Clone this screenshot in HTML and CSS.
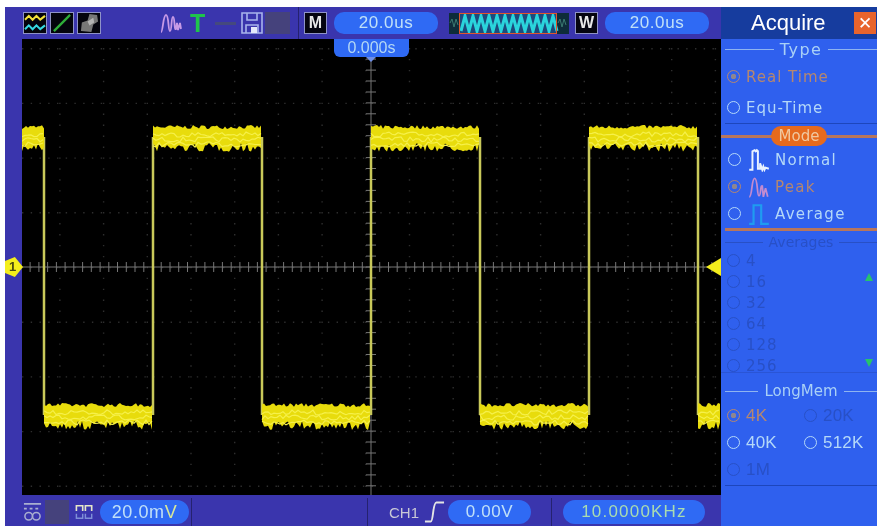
FILE: index.html
```html
<!DOCTYPE html>
<html lang="en">

<head>
    <meta charset="UTF-8">
    <meta name="viewport" content="width=device-width, initial-scale=1.0">
    <title>Oscilloscope - Acquire</title>
    <link rel="stylesheet" href="styles.css">
</head>

<body>
    <div class="scope">
        <div class="screen">
            <div class="top-bar">
                <div class="thumb">
                    <svg viewBox="0 0 23 21" class="fill">
                        <path d="M1 7 L5 3 L9 7 L13 3 L17 7 L22 3" stroke="#f2e23a" stroke-width="2.2" fill="none" />
                        <path d="M1 17 L5 13 L9 17 L13 13 L17 17 L22 13" stroke="#35d8e0" stroke-width="2.2" fill="none" />
                    </svg>
                </div>
                <div class="thumb">
                    <svg viewBox="0 0 23 21" class="fill">
                        <path d="M3 19 L20 2" stroke="#2fae3a" stroke-width="2.4" fill="none" />
                    </svg>
                </div>
                <div class="thumb">
                    <svg viewBox="0 0 23 21" class="fill">
                        <path d="M3 19 L4 10 L10 8 L12 1 L20 2 L21 9 L16 12 L14 20 Z" fill="#777" />
                        <path d="M10 9 L16 5 L17 10 L12 13 Z" fill="#b4b4b4" />
                    </svg>
                </div>
                <svg viewBox="0 0 22 22" class="peak-icon">
                    <path d="M1 20 C3 20 3 3 6 3 C9 3 8 19 10 19 C12 19 11 5 13 5 C15 5 14 19 16 17 L17 11 L18 18 L20 11 L21 17" stroke="#c79ae6" stroke-width="1.8" fill="none" />
                </svg>
                <span class="trig-t">T</span>
                <span class="dim-line"></span>
                <svg viewBox="0 0 22 22" class="save-icon">
                    <path d="M1 1 H21 V21 H1 Z M6 1 V8 H16 V1 M5 21 V13 H17 V21" stroke="#a8b4ec" stroke-width="1.6" fill="none" />
                    <rect x="10" y="15" width="6" height="6" fill="#e4e8fa" />
                </svg>
                <span class="dim-box"></span>
                <span class="divider"></span>
                <span class="letter-box">M</span>
                <span class="pill top-pill">20.0us</span>
                <div class="window-view">
                    <svg viewBox="0 0 120 21" class="fill" id="windowWave"></svg>
                </div>
                <span class="letter-box">W</span>
                <span class="pill top-pill">20.0us</span>
            </div>

            <div class="middle">
                <div class="left-strip">
                    <span class="ch-marker">1</span>
                </div>
                <div class="plot">
                    <svg viewBox="0 0 699 456" class="fill" id="trace"></svg>
                    <div class="time-marker">0.000s</div>
                    <span class="trig-marker"></span>
                </div>
            </div>

            <div class="bottom-bar">
                <svg viewBox="0 0 20 22" class="dc-icon">
                    <path d="M1 2 H19 M1 7 H4 M7 7 H10 M13 7 H16" stroke="#a9aed0" stroke-width="1.8" fill="none" />
                    <circle cx="6" cy="15" r="4" stroke="#a9aed0" stroke-width="1.6" fill="none" />
                    <circle cx="14" cy="15" r="4" stroke="#a9aed0" stroke-width="1.6" fill="none" />
                </svg>
                <span class="dim-box small"></span>
                <svg viewBox="0 0 20 20" class="probe-icon">
                    <path d="M1 9 V3 H8 V9 M11 9 V3 H18 V9" stroke="#e6e6c8" stroke-width="1.8" fill="none" />
                    <path d="M1 12 V17 H8 V12 M11 12 V17 H18 V12" stroke="#7f8fd8" stroke-width="1.6" fill="none" />
                </svg>
                <span class="pill volt-pill">20.0m<span class="tint">V</span></span>
                <span class="divider tall"></span>
                <span class="divider tall before-trig"></span>
                <span class="ch-label">CH1</span>
                <svg viewBox="0 0 22 24" class="edge-icon">
                    <path d="M1 22 H7 C10 22 9 2 13 2 H21" stroke="#e4e4e4" stroke-width="2" fill="none" />
                </svg>
                <span class="pill trig-pill">0.00V</span>
                <span class="divider tall after-trig"></span>
                <span class="pill freq-pill">10.0000KHz</span>
            </div>
        </div>

        <div class="panel">
            <div class="panel-head">
                <span class="panel-title">Acquire</span>
                <span class="close-btn">✕</span>
            </div>

            <div class="section-title type-title">Type</div>
            <div class="option selected row-type"><span class="radio"></span>Real Time</div>
            <div class="option row-type"><span class="radio"></span>Equ-Time</div>

            <div class="rule-dark"></div>
            <div class="mode-title"><span class="mode-pill">Mode</span></div>

            <div class="option row-mode">
                <span class="radio"></span>
                <svg viewBox="0 0 20 22" class="mode-icon">
                    <path d="M1 20 H4 V3 L6 2 L7 3 L8 2 L9 3 V19 H11 V14 L13 20 L14 17 L15 20 L16 18 L19 19" stroke="#e8f2ff" stroke-width="1.8" fill="none" />
                </svg>
                Normal
            </div>
            <div class="option selected row-mode">
                <span class="radio"></span>
                <svg viewBox="0 0 20 22" class="mode-icon">
                    <path d="M1 20 C4 20 3 3 6 3 C9 3 8 19 10 19 C12 19 11 9 13 10 L14 20 L16 12 L18 20" stroke="#c38bd0" stroke-width="1.6" fill="none" />
                </svg>
                Peak
            </div>
            <div class="option row-mode">
                <span class="radio"></span>
                <svg viewBox="0 0 20 22" class="mode-icon">
                    <path d="M1 20 H5 V3 H12 V20 H19" stroke="#1f9cf0" stroke-width="2" fill="none" />
                </svg>
                Average
            </div>

            <div class="rule-orange"></div>
            <div class="section-title avg-title">Averages</div>
            <div class="avg-list">
                <div class="option disabled row-avg"><span class="radio"></span>4</div>
                <div class="option disabled row-avg"><span class="radio"></span>16</div>
                <div class="option disabled row-avg"><span class="radio"></span>32</div>
                <div class="option disabled row-avg"><span class="radio"></span>64</div>
                <div class="option disabled row-avg"><span class="radio"></span>128</div>
                <div class="option disabled row-avg"><span class="radio"></span>256</div>
                <span class="scroll-mark up"></span>
                <span class="scroll-mark down"></span>
            </div>

            <div class="section-title mem-title">LongMem</div>
            <div class="mem-grid">
                <div class="option selected"><span class="radio"></span>4K</div>
                <div class="option disabled"><span class="radio"></span>20K</div>
                <div class="option"><span class="radio"></span>40K</div>
                <div class="option"><span class="radio"></span>512K</div>
                <div class="option disabled"><span class="radio"></span>1M</div>
            </div>
            <div class="rule-dark end"></div>
        </div>
    </div>

    <script src="trace.js"></script>
</body>

</html>
```

FILE: styles.css
```css
* {
    margin: 0;
    padding: 0;
    box-sizing: border-box;
}

body {
    background: #fff;
    font-family: 'DejaVu Sans', sans-serif;
    overflow: hidden;
}

.scope {
    display: flex;
    width: 872px;
    height: 519px;
    margin: 7px 0 0 5px;
    filter: blur(0.5px);
}

.fill {
    display: block;
    width: 100%;
    height: 100%;
}

.screen {
    width: 716px;
    display: flex;
    flex-direction: column;
    background: #3a35ad;
}

/* top bar */
.top-bar {
    height: 32px;
    flex: none;
    display: flex;
    align-items: center;
    padding-left: 18px;
}

.thumb {
    width: 24px;
    height: 22px;
    margin-right: 3px;
    background: #04040c;
    border: 1px solid #8f93c8;
}

.peak-icon {
    width: 22px;
    height: 22px;
    margin-left: 56px;
}

.trig-t {
    margin-left: 8px;
    width: 14px;
    font: bold 25px/25px 'Liberation Sans', sans-serif;
    color: #1fc44c;
}

.dim-line {
    width: 21px;
    height: 3px;
    margin-left: 11px;
    background: #45497e;
}

.save-icon {
    width: 22px;
    height: 22px;
    margin-left: 5px;
}

.dim-box {
    width: 25px;
    height: 22px;
    margin-left: 2px;
    background: #45427c;
}

.dim-box.small {
    width: 24px;
    height: 24px;
    margin-left: 3px;
}

.divider {
    width: 1px;
    height: 32px;
    margin-left: 8px;
    background: #25226f;
}

.letter-box {
    width: 23px;
    height: 22px;
    margin-left: 5px;
    background: #050510;
    border: 1px solid #8f93c8;
    color: #e8e8e8;
    font: bold 16px/20px 'Liberation Sans', sans-serif;
    text-align: center;
}

.pill {
    background: #2f6af4;
    color: #c0e0f8;
    border-radius: 10px;
    text-align: center;
    font-family: 'Liberation Sans', sans-serif;
    letter-spacing: 0.6px;
}

.top-pill {
    width: 104px;
    height: 22px;
    margin-left: 7px;
    font-size: 17px;
    line-height: 22px;
}

.window-view {
    width: 120px;
    height: 21px;
    margin-left: 11px;
    background: #0e2c3a;
}

.window-view + .letter-box {
    margin-left: 6px;
}

/* plot area */
.middle {
    flex: 1;
    display: flex;
    min-height: 0;
}

.left-strip {
    width: 17px;
    flex: none;
    position: relative;
}

.ch-marker {
    position: absolute;
    top: 218px;
    left: 0;
    width: 18px;
    height: 20px;
    background: #f4ee1c;
    clip-path: polygon(0 20%, 55% 0, 100% 50%, 55% 100%, 0 80%);
    color: #4a4a10;
    font: bold 13px/20px 'Liberation Sans', sans-serif;
    padding-left: 4px;
    z-index: 2;
}

.plot {
    flex: 1;
    position: relative;
    background: #000;
}

.time-marker {
    position: absolute;
    left: 312px;
    top: 0;
    width: 75px;
    height: 18px;
    background: #2f6af4;
    border-radius: 0 0 6px 6px;
    color: #b4d8f4;
    font: 16px/17px 'Liberation Sans', sans-serif;
    text-align: center;
}

.time-marker::after {
    content: '';
    position: absolute;
    left: 32px;
    top: 18px;
    border-left: 5px solid transparent;
    border-right: 5px solid transparent;
    border-top: 5px solid #6f8fe8;
}

.trig-marker {
    position: absolute;
    right: 0;
    top: 219px;
    border-top: 9px solid transparent;
    border-bottom: 9px solid transparent;
    border-right: 15px solid #f4ee1c;
}

/* bottom bar */
.bottom-bar {
    height: 31px;
    flex: none;
    display: flex;
    align-items: center;
    padding: 3px 0 0 18px;
}

.dc-icon {
    width: 19px;
    height: 21px;
}

.probe-icon {
    width: 19px;
    height: 18px;
    margin-left: 6px;
}

.volt-pill {
    width: 89px;
    height: 24px;
    margin-left: 6px;
    font-size: 18px;
    line-height: 24px;
    border-radius: 12px;
}

.tint {
    color: #d8e89a;
}

.divider.tall {
    height: 28px;
    margin-left: 2px;
}

.divider.before-trig {
    margin-left: 175px;
}

.ch-label {
    width: 28px;
    margin-left: 21px;
    color: #c9c9d6;
    font: 15px 'Liberation Sans', sans-serif;
    white-space: nowrap;
}

.edge-icon {
    width: 21px;
    height: 24px;
    margin-left: 7px;
}

.trig-pill {
    width: 83px;
    height: 24px;
    margin-left: 3px;
    font-size: 17px;
    line-height: 24px;
    border-radius: 12px;
}

.divider.after-trig {
    margin-left: 20px;
}

.freq-pill {
    width: 142px;
    height: 24px;
    margin-left: 11px;
    font-size: 17px;
    letter-spacing: 1.2px;
    line-height: 24px;
    border-radius: 12px;
    color: #a9dcb0;
}

/* right panel */
.panel {
    width: 156px;
    background: #2f60ee;
    color: #b4d8f8;
    display: flex;
    flex-direction: column;
    font-size: 15px;
}

.panel-head {
    height: 32px;
    flex: none;
    display: flex;
    align-items: center;
    justify-content: space-between;
    padding: 0 1px 0 30px;
    background: #163c9e;
}

.panel-title {
    color: #fff;
    font: 22px 'Liberation Sans', sans-serif;
}

.close-btn {
    width: 22px;
    height: 22px;
    background: #e8642c;
    color: #fff;
    font: bold 17px/22px 'DejaVu Sans', sans-serif;
    text-align: center;
}

.section-title {
    display: flex;
    align-items: center;
    gap: 6px;
    height: 20px;
    color: #a9d0f6;
    white-space: nowrap;
}

.section-title::before,
.section-title::after {
    content: '';
    flex: 1;
    height: 1px;
    background: #8fb4f0;
}

.section-title::before {
    margin-left: 4px;
}

.type-title {
    font-size: 16px;
    letter-spacing: 1.4px;
}

.option {
    display: flex;
    align-items: center;
    padding-left: 6px;
    letter-spacing: 1px;
    white-space: nowrap;
}

.option.selected {
    color: #b5876f;
}

.option.disabled {
    color: #2850c6;
}

.radio {
    width: 13px;
    height: 13px;
    flex: none;
    margin-right: 6px;
    border: 1.5px solid currentColor;
    border-radius: 50%;
}

.selected .radio {
    background: radial-gradient(circle, #8d8590 0 2.5px, transparent 3px);
}

.row-type {
    height: 31px;
    margin-top: 2px;
}

.row-type + .row-type {
    margin-top: 0;
}

.rule-dark {
    height: 1px;
    flex: none;
    margin-left: 4px;
    background: #1d46bc;
}

.mode-title {
    height: 20px;
    flex: none;
    margin-top: 2px;
    display: flex;
    justify-content: center;
    align-items: center;
    background: linear-gradient(#0000 9px, #b8765c 9px, #b8765c 12px, #0000 12px);
}

.mode-pill {
    width: 56px;
    height: 20px;
    background: #e66a1e;
    border-radius: 10px;
    color: #f0c8a0;
    text-align: center;
    line-height: 20px;
}

.row-mode {
    height: 27px;
    padding-left: 7px;
    letter-spacing: 1.3px;
}

.mode-icon {
    width: 24px;
    height: 24px;
    margin-right: 4px;
}

.rule-orange {
    height: 3px;
    flex: none;
    margin: 1px 0 0 4px;
    background: #b8765c;
}

.avg-title {
    margin-top: 1px;
    font-size: 14px;
    color: #2850c6;
}

.avg-title::before,
.avg-title::after {
    background: #2850c6;
}

.avg-list {
    position: relative;
    flex: none;
    height: 123px;
    margin-top: -2px;
    border-bottom: 1px solid #2a55d6;
}

.row-avg {
    height: 21px;
}

.scroll-mark {
    position: absolute;
    right: 4px;
    border-left: 4px solid transparent;
    border-right: 4px solid transparent;
}

.scroll-mark.up {
    top: 23px;
    border-bottom: 8px solid #27c46a;
}

.scroll-mark.down {
    top: 109px;
    border-top: 8px solid #27c46a;
}

.mem-title {
    height: 22px;
    margin-top: 7px;
}

.mem-grid {
    display: grid;
    grid-template-columns: 77px 1fr;
    grid-auto-rows: 27px;
}

.mem-grid .option {
    letter-spacing: 0.2px;
    font-family: 'Liberation Sans', sans-serif;
    font-size: 17px;
}

.rule-dark.end {
    margin-top: 2px;
}
```

FILE: trace.js
```js
const NS = 'http://www.w3.org/2000/svg';

// fixed seed so the noise comes out the same every run
let seed = 7;
function rand() {
    seed = (seed * 16807) % 2147483647;
    return seed / 2147483647;
}

function add(svg, tag, attrs) {
    const el = document.createElementNS(NS, tag);
    for (const key in attrs) {
        el.setAttribute(key, attrs[key]);
    }
    svg.appendChild(el);
    return el;
}

const svg = document.getElementById('trace');
const stepX = 43.7;
const stepY = 54.7;
const midX = 349;
const midY = 228;
const topY = 9;

// grid dots
let dots = '';
for (let row = 0; row <= 8; row++) {
    const y = topY + row * stepY;
    for (let x = 0; x < 699; x += stepX / 5) {
        dots += `M${x.toFixed(1)} ${y.toFixed(1)}h1.4v1.4h-1.4z`;
    }
}
for (let col = 0; col <= 16; col++) {
    const x = col * stepX - 6.5;
    for (let y = topY; y < 450; y += stepY / 5) {
        dots += `M${x.toFixed(1)} ${y.toFixed(1)}h1.4v1.4h-1.4z`;
    }
}
add(svg, 'path', { d: dots, fill: '#2e2e2e' });

// centre axes with their tick marks
let axes = `M0 ${midY}H699M${midX} 18V456`;
for (let x = midX % (stepX / 5); x < 699; x += stepX / 5) {
    axes += `M${x.toFixed(1)} ${midY - 5}v10`;
}
for (let y = midY % (stepY / 5); y < 456; y += stepY / 5) {
    if (y > 20) {
        axes += `M${midX - 5} ${y.toFixed(1)}h10`;
    }
}
add(svg, 'path', { d: axes, stroke: '#777', 'stroke-width': 1, fill: 'none' });

// square wave edges
const edges = [22, 131, 240, 349, 458, 567, 676];
const high = 98;
const low = 376;
let wave = '';
edges.forEach((x) => {
    wave += `M${x} ${high}V${low}`;
});
add(svg, 'path', { d: wave, stroke: '#c9c95a', 'stroke-width': 2.5, fill: 'none' });

// one noisy band between two x positions
function band(x1, x2, y) {
    let top = '';
    let bottom = '';
    for (let x = x1; x <= x2; x += 2) {
        top += `${x},${(y - 9 - rand() * 4).toFixed(1)} `;
        bottom = `${x},${(y + 5 + rand() * 9).toFixed(1)} ` + bottom;
    }
    add(svg, 'polygon', { points: top + bottom, fill: '#e8dc0c' });

    for (let n = 0; n < 3; n++) {
        let line = '';
        for (let x = x1; x <= x2; x += 3) {
            line += `${x},${(y - 6 + n * 5 + rand() * 5).toFixed(1)} `;
        }
        add(svg, 'polyline', { points: line, fill: 'none', stroke: '#f6f04a', 'stroke-width': 1.2 });
    }
}

band(0, 22, 99);
band(131, 240, 99);
band(349, 458, 99);
band(567, 676, 99);
band(22, 131, 377);
band(240, 349, 377);
band(458, 567, 377);
band(676, 699, 377);

// zoomed-out view in the top bar
const mini = document.getElementById('windowWave');
add(mini, 'rect', { x: 10, y: 0, width: 98, height: 21, fill: '#1c4a7c' });
let zig = 'M12 18';
for (let x = 12; x < 104; x += 8) {
    zig += `L${x + 4} 3L${x + 8} 18`;
}
add(mini, 'path', { d: zig, stroke: '#2ad4dc', 'stroke-width': 3, fill: 'none' });
add(mini, 'path', { d: 'M1 10l2 -4l2 8l2 -8l2 6M109 10l2 -4l2 8l2 -8l2 6', stroke: '#3a7a70', 'stroke-width': 1, fill: 'none' });
add(mini, 'rect', { x: 10.5, y: 0.5, width: 97, height: 20, fill: 'none', stroke: '#e0562c', 'stroke-width': 1 });
```
